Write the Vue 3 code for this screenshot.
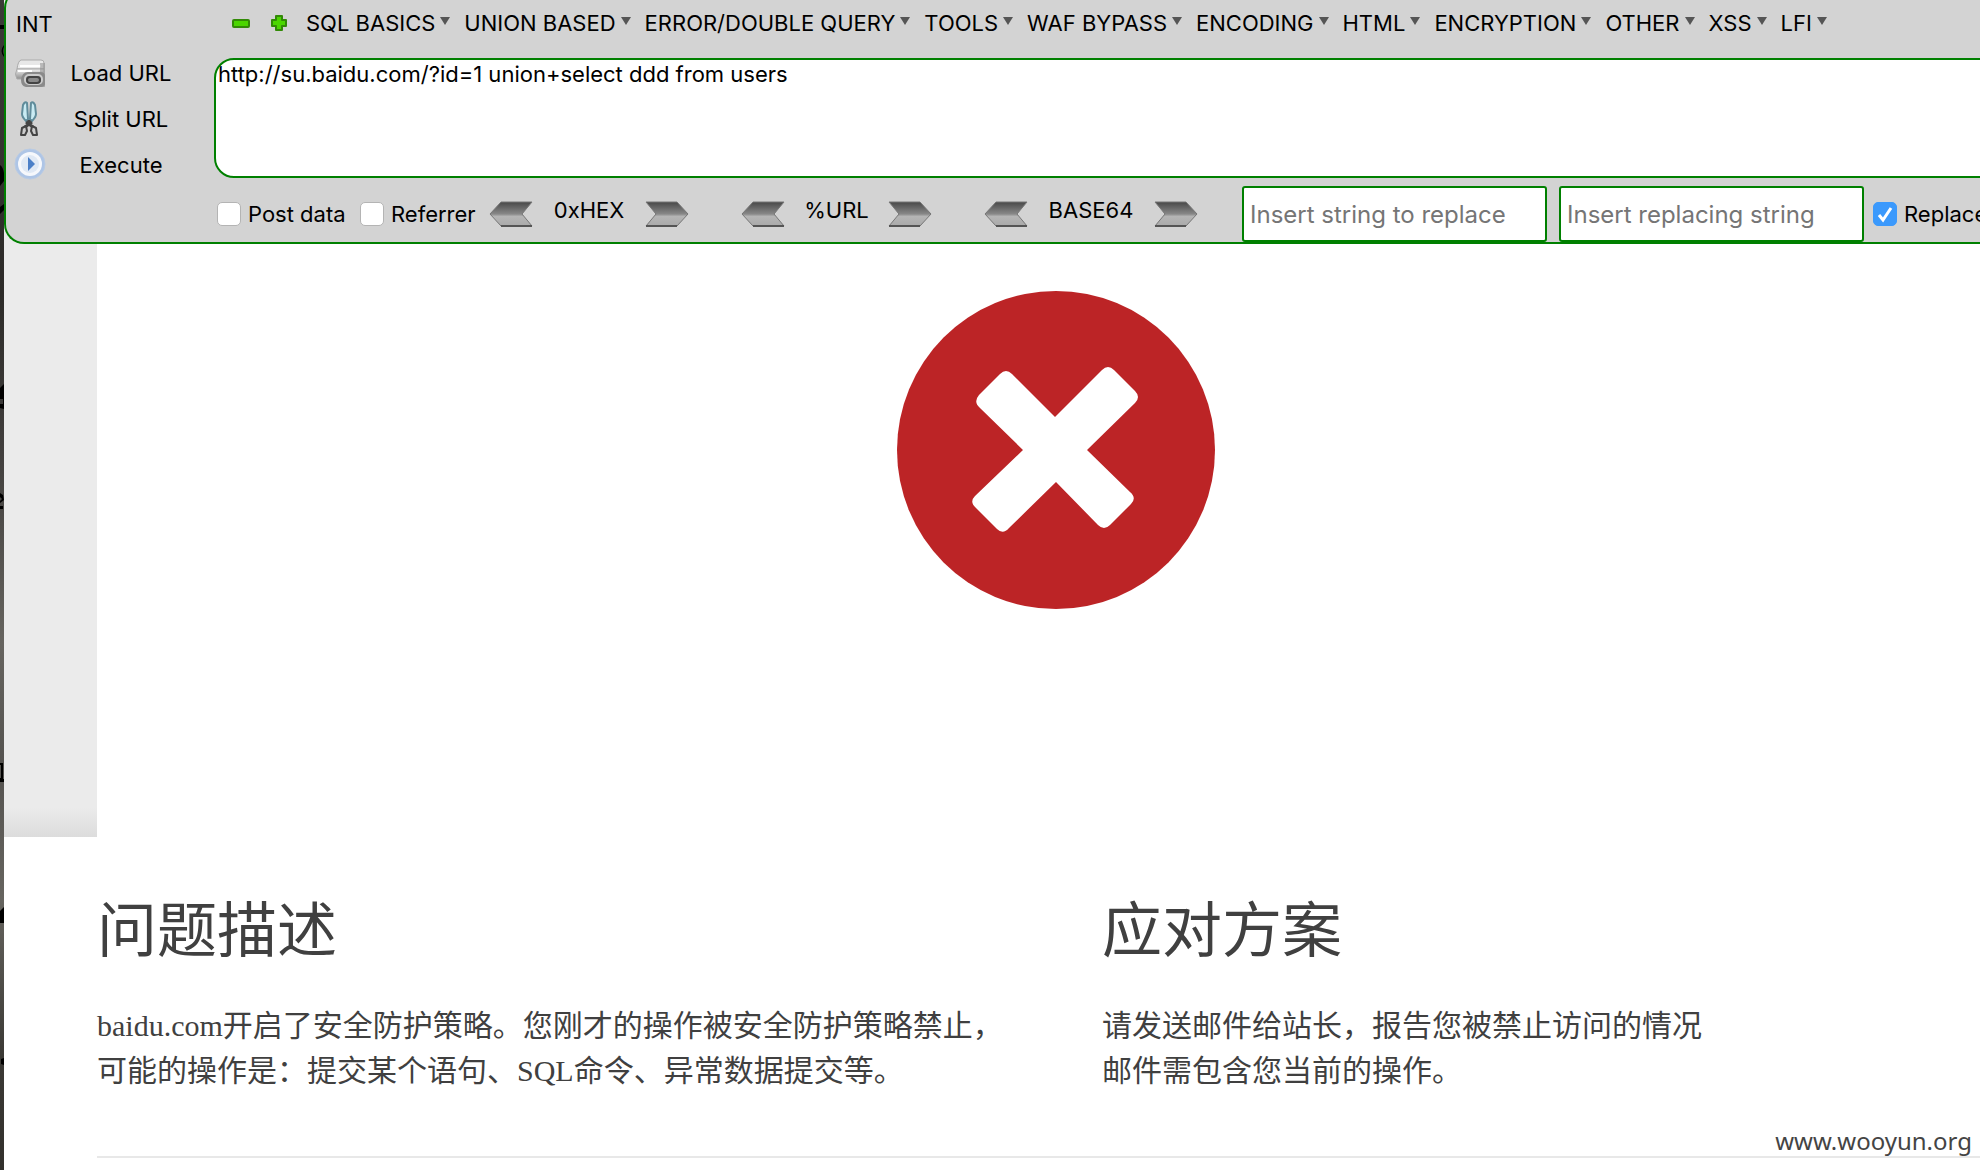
<script setup>
import { ref } from 'vue'

const menus = ['SQL BASICS', 'UNION BASED', 'ERROR/DOUBLE QUERY', 'TOOLS', 'WAF BYPASS', 'ENCODING', 'HTML', 'ENCRYPTION', 'OTHER', 'XSS', 'LFI']
const codecs = [
  { label: '0xHEX', size: 'medium' },
  { label: '%URL', size: 'small' },
  { label: 'BASE64', size: 'large' },
]
const url = ref('http://su.baidu.com/?id=1 union+select ddd from users')
const postData = ref(false)
const referrer = ref(false)
const replaceAll = ref(true)
const search = ref('')
const replacement = ref('')
</script>

<template>
  <div class="screen">
    <div class="desktop-edge">
      <svg width="4" height="1170" viewBox="0 0 4 1170">
        <path d="M0 25h4v4H0zM4 45q-5 6 0 12v-2q-2-4 0-8zM0 165q3 2 4 8v8l-4 5zM0 207l4-3v6l-4 4zM0 388l4-4v25l-4-1v-4h3v-5H0zM0 493l3 2 1 5-4 3v-2l2-2-2-2zM0 506h3v3H0zM0 763h3v16h1v3H0v-4h1v-13H0zM0 911l4-4v16H0zM1 1059l3-1v7l-3-1z" fill="#000" />
      </svg>
    </div>
    <div class="window">
      <div class="chrome">
        <header class="toolbar">
          <div class="actions">
            <div class="profile">INT</div>
            <button class="action" type="button">
              <svg class="action-icon" viewBox="0 0 32 36">
                <defs>
                  <linearGradient id="printer" x1="0" y1="0" x2="0" y2="1">
                    <stop offset="0" stop-color="#f0f0f0" />
                    <stop offset="1" stop-color="#8e8e8e" />
                  </linearGradient>
                </defs>
                <path d="M7 5h20q3 0 3 3v6H3q1-8 4-9z" fill="#e8e8e8" stroke="#aaa" />
                <path d="M3 14h27v10H3q-3-5 0-10z" fill="url(#printer)" stroke="#aaa" />
                <path d="M6 11h21M4 16h14" stroke="#fff" stroke-width="2" />
                <path d="M26 8h5v24h-5z" fill="#888" opacity=".5" />
                <path d="M7 25q1-8 7-8h12q5 0 5 4v8q0 3-4 3H12q-5-1-5-7z" fill="#8a8a8a" />
                <rect x="11" y="20" width="17" height="9" rx="4" fill="none" stroke="#ccc" stroke-width="2" />
                <rect x="13" y="22" width="13" height="6" rx="3" fill="none" stroke="#444" stroke-width="2" />
              </svg>
              <span class="action-label">Load URL</span>
            </button>
            <button class="action" type="button">
              <svg class="action-icon" viewBox="0 0 32 36">
                <path d="M9 4q2-4 4-2l1 16-2 2q-4-4-4-7zM21 4q-2-4-4-2l-1 16 2 2q4-4 4-7z" fill="#c9ebf3" stroke="#608c9b" stroke-width="2" />
                <path d="M15 19v4M12 21l7 5M18 21l-7 5" stroke="#444" stroke-width="3" />
                <path d="M8 27l4-2 1 5-2 4H7zM22 27l-4-2-1 5 2 4h4z" fill="#ccc" stroke="#444" stroke-width="2" stroke-linejoin="round" />
              </svg>
              <span class="action-label">Split URL</span>
            </button>
            <button class="action" type="button">
              <svg class="action-icon" viewBox="0 0 32 36">
                <circle cx="16" cy="17" r="15" fill="#aec5e6" stroke="#b9cbe4" />
                <circle cx="16" cy="17" r="12" fill="#f6f8fc" />
                <circle cx="16" cy="17" r="9" fill="#e0e9f5" />
                <path d="M14 10l7 7-7 7z" fill="#4c80c8" />
              </svg>
              <span class="action-label">Execute</span>
            </button>
          </div>

          <div class="workspace">
            <nav class="menubar">
              <button class="sign" type="button" aria-label="Remove">
                <svg viewBox="0 0 18 18"><rect x="1" y="6" width="16" height="7" rx="1" fill="#4bd600" stroke="#328a06" stroke-width="2" /></svg>
              </button>
              <button class="sign" type="button" aria-label="Add">
                <svg viewBox="0 0 18 18"><path d="M6 2h6v4h4v6h-4v4H6v-4H2V6h4z" fill="#4bd600" stroke="#328a06" stroke-width="2" stroke-linejoin="round" /></svg>
              </button>
              <button v-for="menu in menus" :key="menu" class="menu" type="button">
                {{ menu }}<svg class="caret" viewBox="0 0 10 8"><path d="M0 0h10L5 8z" fill="#555" /></svg>
              </button>
            </nav>
            <textarea v-model="url" class="url" aria-label="URL" spellcheck="false"></textarea>
            <div class="options">
              <label class="option post"><input v-model="postData" type="checkbox" />Post data</label>
              <label class="option referrer"><input v-model="referrer" type="checkbox" />Referrer</label>
              <div v-for="codec in codecs" :key="codec.label" class="codec" :class="codec.size">
                <button class="arrow" type="button" :aria-label="'Decode ' + codec.label">
                  <svg viewBox="0 0 44 26">
                    <defs>
                      <linearGradient id="metal" x1="0" y1="0" x2="0" y2="1">
                        <stop offset="0" stop-color="#484848" />
                        <stop offset=".5" stop-color="#888" />
                        <stop offset=".6" stop-color="#b5b5b5" />
                        <stop offset="1" stop-color="#aaa" />
                      </linearGradient>
                    </defs>
                    <path d="M12 1h31L33 13l10 12H12L1 13z" fill="url(#metal)" stroke="#777" />
                    <path d="M12 25h31" stroke="#555" stroke-width="2" />
                  </svg>
                </button>
                <span class="codec-label">{{ codec.label }}</span>
                <button class="arrow" type="button" :aria-label="'Encode ' + codec.label">
                  <svg viewBox="0 0 44 26">
                    <path d="M32 1H1l10 12L1 25h31l11-12z" fill="url(#metal)" stroke="#777" />
                    <path d="M32 25H1" stroke="#555" stroke-width="2" />
                  </svg>
                </button>
              </div>
              <input v-model="search" class="field" type="text" placeholder="Insert string to replace" aria-label="Insert string to replace" />
              <input v-model="replacement" class="field" type="text" placeholder="Insert replacing string" aria-label="Insert replacing string" />
              <label class="option replace"><input v-model="replaceAll" type="checkbox" />Replace</label>
            </div>
          </div>
        </header>
      </div>

      <main class="page">
        <section class="hero">
          <div class="shade"></div>
          <div class="banner">
            <svg class="error" viewBox="0 0 318 318" role="img" aria-label="Error">
              <circle cx="159" cy="159" r="159" fill="#bc2426" />
              <path d="M103 83Q109 77 115 83L158 126 205 79Q211 73 217 79L238 100Q244 106 238 112L190 159 233 201Q240 207 234 213L213 234Q207 240 201 234L159 191 112 237Q106 244 100 238L79 217Q72 211 78 205L126 159 83 117Q76 111 82 104Z" fill="#fff" />
            </svg>
          </div>
        </section>
        <div class="columns">
          <section>
            <h2>问题描述</h2>
            <p>baidu.com开启了安全防护策略。您刚才的操作被安全防护策略禁止，<br />可能的操作是：提交某个语句、SQL命令、异常数据提交等。</p>
          </section>
          <section>
            <h2>应对方案</h2>
            <p>请发送邮件给站长，报告您被禁止访问的情况<br />邮件需包含您当前的操作。</p>
          </section>
        </div>
      </main>
    </div>
    <div class="watermark">www.wooyun.org</div>
  </div>
</template>

<style>
body {
  margin: 0;
  background: #fff;
}
</style>

<style scoped>
.screen {
  position: relative;
  display: flex;
  min-height: 100vh;
  overflow: hidden;
  font-family: Inter, "Liberation Sans", sans-serif;
  font-size: 22px;
  color: #000;
}
.desktop-edge {
  flex: none;
  width: 4px;
  background: linear-gradient(#3c3a38, #2c2a28 25%, #444240 40%, #66645f 55%, #555350 65%, #66645f 77%, #3c3a36 90%, #32302c);
}
.desktop-edge svg {
  display: block;
}
.window {
  flex: 1;
  min-width: 0;
  overflow: hidden;
}
.chrome {
  overflow: hidden;
  background: #ebebeb;
}
/* The top edge is scrolled out of view, leaving only the end of its rounded corner. */
.toolbar {
  display: flex;
  box-sizing: border-box;
  margin-top: -12px;
  padding-top: 10px;
  border: 2px solid #008000;
  border-right: 0;
  border-radius: 20px 0 0 20px;
  background: #d3d3d3;
}
.screen button {
  padding: 0;
  border: 0;
  background: none;
  font: inherit;
  color: inherit;
}
.actions {
  flex: none;
  width: 208px;
}
.profile {
  padding-left: 10px;
  height: 50px;
  line-height: 48px;
}
.action {
  display: flex;
  align-items: center;
  width: 100%;
  height: 46px;
}
.action-icon {
  width: 32px;
  height: 36px;
  margin-left: 8px;
}
.action-label {
  width: 150px;
  text-align: center;
}
.workspace {
  flex: 1;
  min-width: 0;
}
.menubar {
  display: flex;
  align-items: center;
  height: 46px;
  padding: 0 0 12px 18px;
  white-space: nowrap;
}
.sign {
  flex: none;
  width: 18px;
  height: 18px;
  margin-right: 20px;
}
.sign + .sign {
  margin-right: 18px;
}
.sign svg,
.arrow svg {
  display: block;
  width: 100%;
}
.menu {
  flex: none;
  display: flex;
  align-items: center;
  margin-right: 14px;
}
.caret {
  width: 10px;
  height: 8px;
  margin: 0 0 4px 5px;
}
.url {
  display: block;
  box-sizing: border-box;
  width: calc(100% + 30px);
  height: 120px;
  padding: 0 2px;
  border: 2px solid #008000;
  border-radius: 20px;
  outline: none;
  resize: none;
  background: #fff;
  font: inherit;
  line-height: 28px;
  color: #000;
}
.options {
  display: flex;
  align-items: center;
  height: 56px;
  padding: 8px 0 0 3px;
  white-space: nowrap;
}
.options > * {
  flex: none;
}
.option {
  display: flex;
  align-items: center;
  gap: 7px;
  line-height: 28px;
}
.option input {
  appearance: none;
  box-sizing: border-box;
  flex: none;
  width: 24px;
  height: 24px;
  margin: 0;
  border: 1px solid #b4b4b4;
  border-radius: 5px;
  background: #fff;
}
.option input:checked {
  border-color: #3b99fc;
  background: #3b99fc url("data:image/svg+xml,%3Csvg xmlns='http://www.w3.org/2000/svg' viewBox='0 0 22 22'%3E%3Cpath d='M5 12l4 5 8-12' fill='none' stroke='white' stroke-width='3'/%3E%3C/svg%3E");
}
.post {
  width: 143px;
}
.referrer {
  width: 129px;
}
.codec {
  display: flex;
  justify-content: space-between;
  align-items: center;
  margin-right: 52px;
}
.medium {
  width: 200px;
}
.small {
  width: 191px;
}
.large {
  width: 214px;
  margin-right: 44px;
}
.codec-label {
  padding-bottom: 8px;
}
.arrow {
  width: 44px;
  height: 26px;
}
.field {
  box-sizing: border-box;
  width: 305px;
  height: 56px;
  margin-right: 12px;
  padding: 0 6px;
  border: 2px solid #008000;
  border-radius: 3px;
  outline: none;
  background: #fff;
  font: inherit;
  font-size: 24px;
}
.field::placeholder {
  color: #757575;
}
.replace {
  margin-left: -3px;
}
.page {
  margin-right: -35px;
  color: #404040;
}
.hero {
  display: flex;
  height: 593px;
}
.shade {
  width: 93px;
  background: linear-gradient(#ebebeb 95%, #dcdcdc);
}
.banner {
  flex: 1;
  padding-top: 47px;
  text-align: center;
}
.error {
  width: 318px;
  height: 318px;
}
.columns {
  display: grid;
  grid-template-columns: 1fr 1fr;
  column-gap: 92px;
  margin-left: 93px;
  padding: 50px 0 63px;
  border-bottom: 2px solid #e8e8e8;
  font-family: "Liberation Serif", "Noto Sans CJK SC", serif;
}
h2 {
  margin: 0;
  font-size: 60px;
  font-weight: 400;
  line-height: 90px;
}
p {
  margin: 26px 0 0;
  font-size: 30px;
  line-height: 45px;
}
.watermark {
  position: absolute;
  right: 8px;
  bottom: 11px;
  font-family: "Noto Sans", sans-serif;
  font-size: 24px;
  line-height: 36px;
  color: #444;
}
</style>
